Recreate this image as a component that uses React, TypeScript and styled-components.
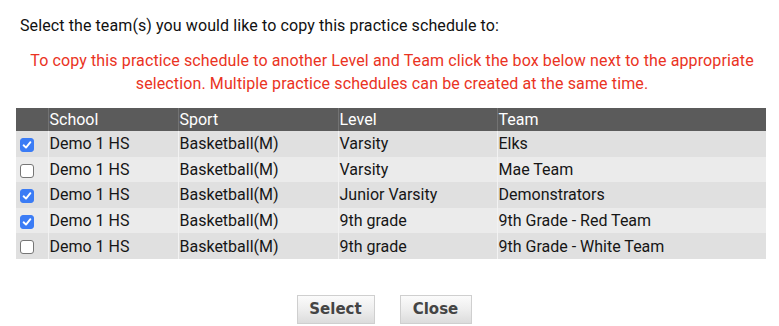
import React from "react";
import styled, { createGlobalStyle } from "styled-components";

const GlobalStyle = createGlobalStyle`
  body {
    margin: 0;
    background: #ffffff;
    font-family: Roboto, "Liberation Sans", Arial, sans-serif;
  }
`;

const Page = styled.div`
  width: 779px;
  height: 326px;
  overflow: hidden;
  box-sizing: border-box;
  padding: 16px 13px 0 16px;
`;

const Title = styled.p`
  margin: 0 0 0 4px;
  font-size: 16px;
  line-height: 20px;
  letter-spacing: 0.1px;
  color: #111;
`;

const Notice = styled.p`
  margin: 13px 0 0;
  padding-left: 2px;
  text-align: center;
  font-size: 16px;
  line-height: 23px;
  letter-spacing: 0.12px;
  color: #ea3323;
`;

const Table = styled.table`
  margin-top: 13px;
  width: 750px;
  table-layout: fixed;
  border-collapse: collapse;
  font-size: 16px;
  color: #161616;
`;

const HeadCell = styled.th<{ $w?: number }>`
  box-sizing: border-box;
  background: #5b5b5b;
  color: #ffffff;
  font-weight: 400;
  text-align: left;
  height: 23px;
  padding: 0 0 0 1px;
  border-left: 1px solid #727272;
  width: ${(p) => (p.$w ? `${p.$w}px` : "auto")};
  &:first-child {
    border-left: none;
  }
`;

const Row = styled.tr<{ $alt: boolean }>`
  background: ${(p) => (p.$alt ? "#ebebeb" : "#e0e0e0")};
`;

const Cell = styled.td`
  height: 25.6px;
  padding: 0 0 0 1px;
  white-space: nowrap;
  border-left: 1px solid #f2f2f2;
  &:first-child {
    border-left: none;
    padding-left: 4px;
  }
`;

const Box = styled.span<{ $on: boolean }>`
  display: inline-flex;
  align-items: center;
  justify-content: center;
  width: 14px;
  height: 14px;
  box-sizing: border-box;
  border-radius: 3px;
  vertical-align: middle;
  background: ${(p) => (p.$on ? "#3b7cf5" : "#ffffff")};
  border: 1px solid ${(p) => (p.$on ? "#3b7cf5" : "#767676")};
`;

const Buttons = styled.div`
  display: flex;
  justify-content: center;
  gap: 25px;
  margin-top: 36px;
  padding-right: 14px;
`;

const Button = styled.button<{ $w: number }>`
  width: ${(p) => p.$w}px;
  height: 29px;
  font-family: Verdana, "DejaVu Sans", sans-serif;
  font-weight: 700;
  font-size: 15px;
  color: #444444;
  border: 1px solid #cfcfcf;
  background: linear-gradient(to bottom, #fbfbfb 0%, #ececec 55%, #dcdcdc 100%);
  padding: 0;
`;

const rows = [
  { on: true, level: "Varsity", team: "Elks" },
  { on: false, level: "Varsity", team: "Mae Team" },
  { on: true, level: "Junior Varsity", team: "Demonstrators" },
  { on: true, level: "9th grade", team: "9th Grade - Red Team" },
  { on: false, level: "9th grade", team: "9th Grade - White Team" },
];

const Check = ({ on }: { on: boolean }) => (
  <Box $on={on}>
    {on && (
      <svg width="10" height="10" viewBox="0 0 10 10">
        <path d="M1.6 5.3 L4 7.6 L8.4 2.2" fill="none" stroke="#fff" strokeWidth="1.9" strokeLinecap="round" strokeLinejoin="round" />
      </svg>
    )}
  </Box>
);

export default function App() {
  return (
    <Page>
      <GlobalStyle />
      <Title>Select the team(s) you would like to copy this practice schedule to:</Title>
      <Notice>
        To copy this practice schedule to another Level and Team click the box below next to the appropriate
        <br />
        selection. Multiple practice schedules can be created at the same time.
      </Notice>
      <Table>
        <thead>
          <tr>
            <HeadCell $w={32} />
            <HeadCell $w={130}>School</HeadCell>
            <HeadCell $w={160}>Sport</HeadCell>
            <HeadCell $w={159}>Level</HeadCell>
            <HeadCell>Team</HeadCell>
          </tr>
        </thead>
        <tbody>
          {rows.map((r, i) => (
            <Row key={i} $alt={i % 2 === 1}>
              <Cell>
                <Check on={r.on} />
              </Cell>
              <Cell>Demo 1 HS</Cell>
              <Cell>Basketball(M)</Cell>
              <Cell>{r.level}</Cell>
              <Cell>{r.team}</Cell>
            </Row>
          ))}
        </tbody>
      </Table>
      <Buttons>
        <Button $w={78}>Select</Button>
        <Button $w={72}>Close</Button>
      </Buttons>
    </Page>
  );
}
